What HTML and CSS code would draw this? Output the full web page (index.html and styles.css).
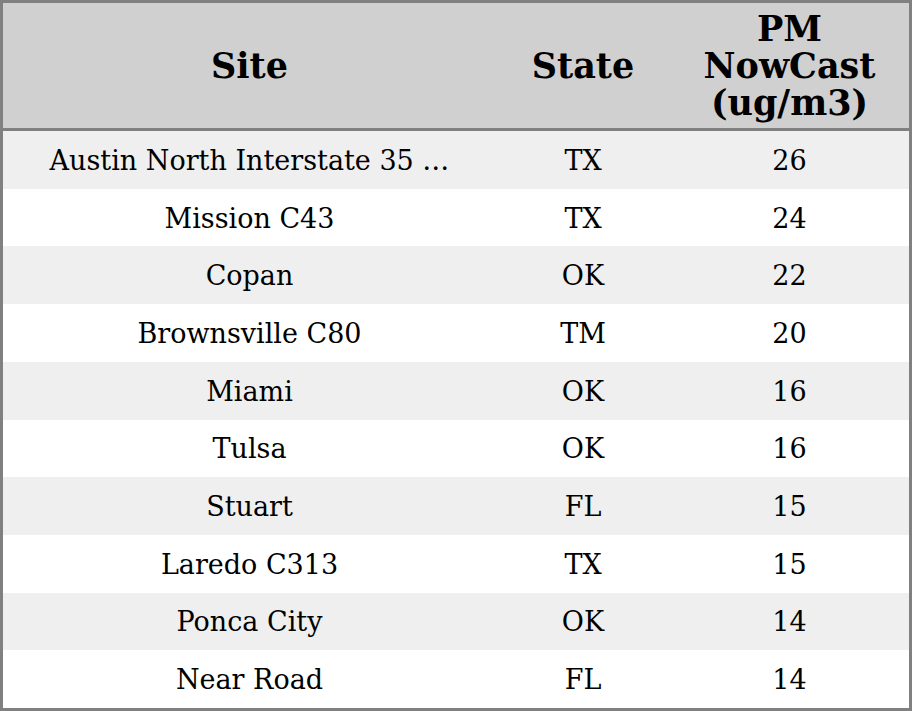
FILE: index.html
```html
<!DOCTYPE html>
<html>
<head>
<meta charset="utf-8">
<link rel="stylesheet" href="styles.css">
</head>
<body>
<div class="table">
  <div class="head">
    <div class="hcell">Site</div>
    <div class="hcell">State</div>
    <div class="hcell">PM<br>NowCast<br>(ug/m3)</div>
  </div>
  <div class="body">
    <div class="row"><div class="cell">Austin North Interstate 35 …</div><div class="cell">TX</div><div class="cell">26</div></div>
    <div class="row"><div class="cell">Mission C43</div><div class="cell">TX</div><div class="cell">24</div></div>
    <div class="row"><div class="cell">Copan</div><div class="cell">OK</div><div class="cell">22</div></div>
    <div class="row"><div class="cell">Brownsville C80</div><div class="cell">TM</div><div class="cell">20</div></div>
    <div class="row"><div class="cell">Miami</div><div class="cell">OK</div><div class="cell">16</div></div>
    <div class="row"><div class="cell">Tulsa</div><div class="cell">OK</div><div class="cell">16</div></div>
    <div class="row"><div class="cell">Stuart</div><div class="cell">FL</div><div class="cell">15</div></div>
    <div class="row"><div class="cell">Laredo C313</div><div class="cell">TX</div><div class="cell">15</div></div>
    <div class="row"><div class="cell">Ponca City</div><div class="cell">OK</div><div class="cell">14</div></div>
    <div class="row"><div class="cell">Near Road</div><div class="cell">FL</div><div class="cell">14</div></div>
  </div>
</div>
</body>
</html>
```
FILE: styles.css
```css
html, body {
  margin: 0;
  padding: 0;
  background: #ffffff;
}
.table {
  width: 912px;
  height: 711px;
  box-sizing: border-box;
  border: 3px solid #808080;
  display: flex;
  flex-direction: column;
  font-family: "DejaVu Serif", serif;
  color: #000;
}
.head {
  height: 125px;
  flex: none;
  display: grid;
  grid-template-columns: 493px 174px 239px;
  background: #d0d0d0;
  border-bottom: 3px solid #808080;
}
.hcell {
  display: flex;
  align-items: center;
  justify-content: center;
  text-align: center;
  font-weight: bold;
  font-size: 35px;
  line-height: 37px;
}
.body {
  flex: 1;
  display: grid;
  grid-template-rows: repeat(10, 1fr);
}
.row {
  display: grid;
  grid-template-columns: 493px 174px 239px;
}
.row:nth-child(odd) {
  background: #efefef;
}
.cell {
  display: flex;
  align-items: center;
  justify-content: center;
  padding-top: 1px;
  font-size: 27px;
  white-space: nowrap;
}
```
